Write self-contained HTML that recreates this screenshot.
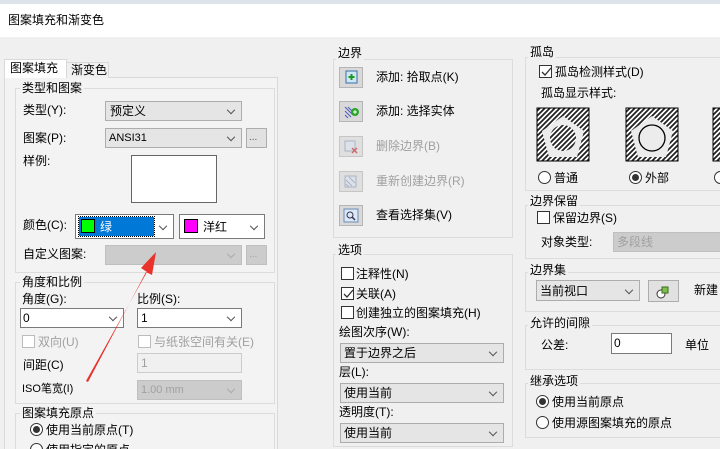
<!DOCTYPE html>
<html style="width:720px;height:449px;overflow:hidden"><head><meta charset="utf-8"><style>
*{box-sizing:border-box;margin:0;padding:0}
body{width:720px;height:449px;overflow:hidden;background:#f0f0f0;font-family:"Liberation Sans","Noto Sans CJK SC",sans-serif;font-size:12px;color:#000;position:relative}
#w{position:absolute;left:0;top:0;width:720px;height:449px;overflow:hidden}
.a{position:absolute;white-space:nowrap;line-height:14px}
.t{position:absolute;white-space:nowrap;line-height:14px;transform:translateY(-7px)}
.g{position:absolute;border:1px solid #dcdcdc}
.gl{position:absolute;background:#f0f0f0;padding:0 2px;line-height:14px;white-space:nowrap;transform:translateY(-7px)}
.cb{position:absolute;background:#e5e5e5;border:1px solid #adadad}
.cw{position:absolute;background:#fff;border:1px solid #7a7a7a}
.cd{position:absolute;background:#cccccc;border:1px solid #bfbfbf}
.ar::after{content:"";position:absolute;right:7px;top:50%;width:5px;height:5px;border-right:1px solid #555;border-bottom:1px solid #555;transform:translateY(-65%) rotate(45deg)}
.cd.ar::after{border-color:#aaa}
.btn{position:absolute;background:#e1e1e1;border:1px solid #adadad}
.chk{position:absolute;width:13px;height:13px;border:1px solid #333;background:#fff}
.chk.dis{border-color:#bcbcbc}
.rad{position:absolute;width:13px;height:13px;border:1px solid #333;border-radius:50%;background:#fff}
.rad.on::after{content:"";position:absolute;left:2px;top:2px;width:7px;height:7px;border-radius:50%;background:#333}
.dis{color:#a0a0a0}
.ic{position:absolute;width:24px;height:21px;background:#d9d9d9;border:1px solid #b5b5b5}
</style></head><body><div id="w">
<div class="a" style="left:0;top:0;width:720px;height:4px;background:#dde3ea"></div>
<div class="a" style="left:0;top:4px;width:720px;height:33px;background:#fff"></div>
<div class="t" style="left:8px;top:20px">图案填充和渐变色</div>

<div class="a" style="left:4px;top:77px;width:274px;height:372px;border:1px solid #d9d9d9;border-bottom:none;background:#f3f3f3"></div>
<div class="a" style="left:66px;top:62px;width:43px;height:16px;border:1px solid #d9d9d9;border-bottom:none;background:#f0f0f0"></div>
<div class="t" style="left:71px;top:70px">渐变色</div>
<div class="a" style="left:4px;top:59px;width:63px;height:19px;border:1px solid #d9d9d9;border-bottom:none;background:#fff"></div>
<div class="t" style="left:10px;top:68px">图案填充</div>

<div class="g" style="left:15px;top:88px;width:260px;height:185px"></div>
<div class="gl" style="left:20px;top:88px;background:#f3f3f3">类型和图案</div>
<div class="t" style="left:23px;top:110px">类型(Y):</div>
<div class="cb ar" style="left:105px;top:101px;width:137px;height:20px"></div>
<div class="t" style="left:110px;top:111px">预定义</div>
<div class="t" style="left:23px;top:138px">图案(P):</div>
<div class="cb ar" style="left:105px;top:128px;width:137px;height:20px"></div>
<div class="t" style="left:109px;top:138px;font-size:11px">ANSI31</div>
<div class="btn" style="left:246px;top:128px;width:21px;height:20px"></div>
<div class="t" style="left:249px;top:138px;font-size:10px;color:#555">...</div>
<div class="t" style="left:23px;top:161px">样例:</div>
<div class="a" style="left:131px;top:155px;width:86px;height:48px;background:#fff;border:1px solid #666"></div>
<div class="t" style="left:23px;top:225px">颜色(C):</div>
<div class="cw ar" style="left:75px;top:214px;width:99px;height:25px"></div>
<div class="a" style="left:79px;top:217px;width:75px;height:19px;background:#0078d7;outline:1px dotted #000"></div>
<div class="a" style="left:81px;top:219px;width:14px;height:14px;background:#00ff00;border:1px solid #000"></div>
<div class="t" style="left:100px;top:227px;color:#fff">绿</div>
<div class="cw ar" style="left:179px;top:214px;width:86px;height:25px"></div>
<div class="a" style="left:184px;top:219px;width:14px;height:14px;background:#ff00ff;border:1px solid #000"></div>
<div class="t" style="left:203px;top:227px">洋红</div>
<div class="t" style="left:23px;top:254px">自定义图案:</div>
<div class="cd ar" style="left:105px;top:245px;width:137px;height:20px"></div>
<div class="cd" style="left:246px;top:245px;width:21px;height:20px"></div>
<div class="t dis" style="left:249px;top:255px;font-size:10px">...</div>

<div class="g" style="left:15px;top:282px;width:260px;height:122px"></div>
<div class="gl" style="left:20px;top:282px;background:#f3f3f3">角度和比例</div>
<div class="t" style="left:22px;top:299px">角度(G):</div>
<div class="t" style="left:137px;top:299px">比例(S):</div>
<div class="cw ar" style="left:20px;top:308px;width:104px;height:20px"></div>
<div class="t" style="left:23px;top:318px">0</div>
<div class="cw ar" style="left:137px;top:308px;width:105px;height:20px"></div>
<div class="t" style="left:141px;top:318px">1</div>
<div class="chk dis" style="left:22px;top:335px"></div>
<div class="t dis" style="left:38px;top:342px">双向(U)</div>
<div class="chk dis" style="left:138px;top:335px"></div>
<div class="t dis" style="left:154px;top:342px">与纸张空间有关(E)</div>
<div class="t" style="left:23px;top:365px">间距(C)</div>
<div class="a" style="left:137px;top:353px;width:105px;height:20px;background:#f0f0f0;border:1px solid #ccc"></div>
<div class="t dis" style="left:141px;top:363px">1</div>
<div class="t" style="left:22px;top:389px;font-size:11px">ISO笔宽(I)</div>
<div class="cd ar" style="left:137px;top:380px;width:105px;height:20px"></div>
<div class="t dis" style="left:141px;top:390px;font-size:11px">1.00 mm</div>

<div class="a" style="left:15px;top:413px;width:260px;height:36px;border:1px solid #dcdcdc;border-bottom:none"></div>
<div class="gl" style="left:20px;top:413px;background:#f3f3f3">图案填充原点</div>
<div class="rad on" style="left:30px;top:423px"></div>
<div class="t" style="left:46px;top:430px">使用当前原点(T)</div>
<div class="a" style="left:30px;top:443px;width:120px;height:6px;overflow:hidden"><div class="rad" style="left:0;top:0"></div><div class="a" style="left:16px;top:0">使用指定的原点</div></div>

<svg class="a" style="left:0;top:0" width="300" height="449"><path d="M86 381 L147 272 L141 268 L156 252 L152 275 L146 272 L88 382 Z" fill="#e8322b"/></svg>

<div class="g" style="left:333px;top:59px;width:180px;height:179px"></div>
<div class="gl" style="left:336px;top:53px">边界</div>
<div class="ic" style="left:339px;top:67px"><svg width="22" height="19"><rect x="6" y="3" width="11" height="12" fill="#cfe6f5" stroke="#3a6ea5"/><path d="M11.5 6v6M8.5 9h6" stroke="#1a9a1a" stroke-width="2"/></svg></div>
<div class="t" style="left:376px;top:77px">添加: 拾取点(K)</div>
<div class="ic" style="left:339px;top:101px"><svg width="22" height="19"><path d="M5 5l8 8M5 9l6 6M5 13l3 3M8 5l6 6" stroke="#4a5bc0"/><circle cx="15" cy="10" r="4" fill="#2aa52a"/><path d="M15 8v4M13 10h4" stroke="#fff"/></svg></div>
<div class="t" style="left:376px;top:111px">添加: 选择实体</div>
<div class="ic" style="left:339px;top:136px;opacity:.7"><svg width="22" height="19"><rect x="5" y="4" width="10" height="10" fill="#d6dde8" stroke="#8a9ab5"/><path d="M12 11l5 5M17 11l-5 5" stroke="#c03030" stroke-width="1.5"/></svg></div>
<div class="t dis" style="left:376px;top:146px">删除边界(B)</div>
<div class="ic" style="left:339px;top:171px;opacity:.7"><svg width="22" height="19"><rect x="5" y="4" width="11" height="11" fill="#d6dde8" stroke="#8a9ab5"/><path d="M6 8l6 6M6 12l3 3M9 5l6 6" stroke="#8a9ab5"/></svg></div>
<div class="t dis" style="left:376px;top:181px">重新创建边界(R)</div>
<div class="ic" style="left:339px;top:205px"><svg width="22" height="19"><rect x="4" y="3" width="14" height="13" fill="#dde8f5" stroke="#6a8ab5"/><circle cx="10" cy="9" r="3" fill="none" stroke="#335"/><path d="M12 11l3 3" stroke="#335" stroke-width="1.5"/></svg></div>
<div class="t" style="left:376px;top:215px">查看选择集(V)</div>

<div class="g" style="left:333px;top:254px;width:180px;height:193px"></div>
<div class="gl" style="left:336px;top:250px">选项</div>
<div class="chk" style="left:341px;top:267px"></div>
<div class="t" style="left:356px;top:274px">注释性(N)</div>
<div class="chk" style="left:341px;top:287px"></div>
<svg class="a" style="left:342px;top:288px" width="12" height="12"><path d="M2 6l3 3 6-7" fill="none" stroke="#333" stroke-width="1.3"/></svg>
<div class="t" style="left:356px;top:294px">关联(A)</div>
<div class="chk" style="left:341px;top:306px"></div>
<div class="t" style="left:356px;top:313px">创建独立的图案填充(H)</div>
<div class="t" style="left:339px;top:332px">绘图次序(W):</div>
<div class="cb ar" style="left:340px;top:343px;width:164px;height:20px"></div>
<div class="t" style="left:344px;top:353px">置于边界之后</div>
<div class="t" style="left:339px;top:372px">层(L):</div>
<div class="cb ar" style="left:340px;top:383px;width:164px;height:20px"></div>
<div class="t" style="left:344px;top:393px">使用当前</div>
<div class="t" style="left:339px;top:412px">透明度(T):</div>
<div class="cb ar" style="left:340px;top:423px;width:164px;height:20px"></div>
<div class="t" style="left:344px;top:433px">使用当前</div>

<div class="a" style="left:525px;top:57px;width:195px;height:134px;border:1px solid #dcdcdc;border-right:none"></div>
<div class="gl" style="left:528px;top:52px">孤岛</div>
<div class="chk" style="left:539px;top:65px"></div>
<svg class="a" style="left:540px;top:66px" width="12" height="12"><path d="M2 6l3 3 6-7" fill="none" stroke="#333" stroke-width="1.3"/></svg>
<div class="t" style="left:555px;top:72px">孤岛检测样式(D)</div>
<div class="t" style="left:541px;top:93px">孤岛显示样式:</div>
<svg class="a" style="left:536px;top:107px" width="184" height="56">
<defs><pattern id="h" x="0" y="0" width="5" height="5" patternUnits="userSpaceOnUse"><rect width="5" height="5" fill="#fff"/><path d="M-1 1L1 -1M0 5L5 0M4 6L6 4" stroke="#222" stroke-width="1.8"/></pattern></defs>
<rect x="1" y="1" width="52" height="53" fill="url(#h)" stroke="#000"/>
<polygon points="27,9 48,24 41,50 13,50 6,24" fill="#ececec"/>
<circle cx="27" cy="31" r="13" fill="url(#h)"/>
<rect x="90" y="1" width="52" height="53" fill="url(#h)" stroke="#000"/>
<polygon points="116,9 137,24 130,50 102,50 95,24" fill="#ececec"/>
<circle cx="116" cy="31" r="13" fill="#ececec" stroke="#000" stroke-width="1.3"/>
<rect x="177" y="1" width="20" height="53" fill="url(#h)" stroke="#000"/>
</svg>
<div class="rad" style="left:538px;top:171px"></div>
<div class="t" style="left:554px;top:178px">普通</div>
<div class="rad on" style="left:629px;top:171px"></div>
<div class="t" style="left:645px;top:178px">外部</div>
<div class="rad" style="left:714px;top:171px"></div>

<div class="a" style="left:525px;top:205px;width:195px;height:54px;border:1px solid #dcdcdc;border-right:none"></div>
<div class="gl" style="left:528px;top:201px">边界保留</div>
<div class="chk" style="left:537px;top:211px"></div>
<div class="t" style="left:553px;top:218px">保留边界(S)</div>
<div class="t" style="left:541px;top:242px">对象类型:</div>
<div class="cd" style="left:613px;top:232px;width:107px;height:20px;border-right:none"></div>
<div class="t dis" style="left:617px;top:242px">多段线</div>

<div class="a" style="left:525px;top:272px;width:195px;height:40px;border:1px solid #dcdcdc;border-right:none"></div>
<div class="gl" style="left:528px;top:270px">边界集</div>
<div class="cb ar" style="left:536px;top:280px;width:104px;height:21px"></div>
<div class="t" style="left:540px;top:291px">当前视口</div>
<div class="btn" style="left:648px;top:280px;width:31px;height:22px"><svg width="29" height="20"><circle cx="12" cy="13" r="4" fill="#fff" stroke="#333"/><rect x="13" y="6" width="6" height="6" fill="#7fc04a" stroke="#3a6a20"/></svg></div>
<div class="t" style="left:694px;top:290px">新建</div>

<div class="a" style="left:525px;top:325px;width:195px;height:45px;border:1px solid #dcdcdc;border-right:none"></div>
<div class="gl" style="left:528px;top:323px">允许的间隙</div>
<div class="t" style="left:541px;top:345px">公差:</div>
<div class="cw" style="left:611px;top:333px;width:61px;height:21px"></div>
<div class="t" style="left:614px;top:343px">0</div>
<div class="t" style="left:685px;top:345px">单位</div>

<div class="a" style="left:525px;top:383px;width:195px;height:55px;border:1px solid #dcdcdc;border-right:none"></div>
<div class="gl" style="left:528px;top:381px">继承选项</div>
<div class="rad on" style="left:536px;top:395px"></div>
<div class="t" style="left:552px;top:402px">使用当前原点</div>
<div class="rad" style="left:536px;top:416px"></div>
<div class="t" style="left:552px;top:423px">使用源图案填充的原点</div>
</div></body></html>
